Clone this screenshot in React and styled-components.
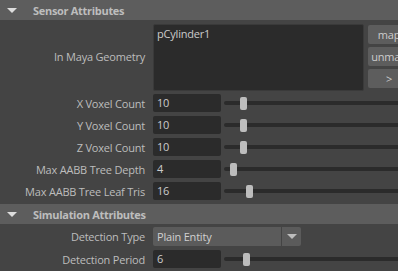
import React from 'react';
import styled, { createGlobalStyle } from 'styled-components';

const Global = createGlobalStyle`
  html, body {
    margin: 0;
    padding: 0;
    background: #444444;
    overflow: hidden;
  }
  body {
    font-family: "Open Sans", "Noto Sans", sans-serif;
    font-size: 11px;
    letter-spacing: -0.2px;
    color: #bdbdbd;
  }
`;

const Editor = styled.div`
  width: 398px;
  height: 271px;
  overflow: hidden;
  background: #444444;
`;

const Header = styled.div`
  display: flex;
  align-items: center;
  height: 20px;
  background: #5d5d5d;
  color: #bdbdbd;
  font-weight: 700;
  font-size: 11px;
  letter-spacing: -0.3px;
  margin-top: ${p => p.top || 0}px;
`;

const Arrow = styled.span`
  width: 0;
  height: 0;
  margin: 0 16px 0 7px;
  border-left: 5px solid transparent;
  border-right: 5px solid transparent;
  border-top: 5px solid #dddddd;
`;

const Section = styled.div`
  display: flex;
  flex-direction: column;
  gap: 4px;
  padding-top: ${p => p.pad}px;
`;

const Row = styled.div`
  display: flex;
  align-items: center;
  height: ${p => p.h || 18}px;
  margin-bottom: ${p => p.mb || 0}px;
`;

const Label = styled.div`
  width: 145px;
  flex: none;
  text-align: right;
  padding-right: 8px;
  white-space: nowrap;
`;

const ListBox = styled.div`
  width: 203px;
  height: 63px;
  flex: none;
  align-self: flex-start;
  background: #2b2b2b;
  border: 1px solid #3a3a3a;
  border-radius: 2px;
  color: #cccccc;
  padding: 1px 3px;
  box-sizing: content-box;
  line-height: 16px;
`;

const ButtonColumn = styled.div`
  display: flex;
  flex-direction: column;
  gap: 3px;
  margin-left: 4px;
  align-self: flex-start;
  margin-top: 1px;
`;

const Button = styled.div`
  width: 42px;
  height: 19px;
  background: #5d5d5d;
  border-radius: 2px;
  color: #cccccc;
  display: flex;
  align-items: center;
  justify-content: center;
  flex: none;
`;

const Field = styled.div`
  width: 64px;
  height: 18px;
  flex: none;
  background: #2b2b2b;
  border-radius: 2px;
  color: #cccccc;
  padding-left: 4px;
  line-height: 18px;
`;

const Track = styled.div`
  position: relative;
  flex: 1;
  min-width: 200px;
  height: 4px;
  margin-left: 3px;
  background: #2b2b2b;
  border-radius: 2px;
`;

const Thumb = styled.div`
  position: absolute;
  top: -4px;
  width: 7px;
  height: 13px;
  background: #bdbdbd;
  border-radius: 2px;
`;

const Dropdown = styled.div`
  display: flex;
  gap: 1px;
  flex: none;
`;

const DropValue = styled.div`
  width: 124px;
  height: 19px;
  background: #5b5b5b;
  border-radius: 2px 0 0 2px;
  color: #d0d0d0;
  padding-left: 4px;
  line-height: 19px;
`;

const DropButton = styled.div`
  width: 19px;
  height: 19px;
  background: #5b5b5b;
  border-radius: 0 2px 2px 0;
  display: flex;
  align-items: center;
  justify-content: center;
  &::after {
    content: '';
    border-left: 5px solid transparent;
    border-right: 5px solid transparent;
    border-top: 5px solid #bdbdbd;
  }
`;

const NumberRow = ({ label, value, pos }) => (
  <Row>
    <Label>{label}</Label>
    <Field>{value}</Field>
    <Track>
      <Thumb style={{ left: pos }} />
    </Track>
  </Row>
);

const sensorRows = [
  { label: 'X Voxel Count', value: '10', pos: 16 },
  { label: 'Y Voxel Count', value: '10', pos: 16 },
  { label: 'Z Voxel Count', value: '10', pos: 16 },
  { label: 'Max AABB Tree Depth', value: '4', pos: 6 },
  { label: 'Max AABB Tree Leaf Tris', value: '16', pos: 22 }
];

export default function App() {
  return (
    <Editor>
      <Global />
      <Header>
        <Arrow />
        Sensor Attributes
      </Header>
      <Section pad={4}>
        <Row h={65} mb={1}>
          <Label>In Maya Geometry</Label>
          <ListBox>pCylinder1</ListBox>
          <ButtonColumn>
            <Button>map</Button>
            <Button>unmap</Button>
            <Button>&gt;</Button>
          </ButtonColumn>
        </Row>
        {sensorRows.map(r => (
          <NumberRow key={r.label} {...r} />
        ))}
      </Section>
      <Header top={4}>
        <Arrow />
        Simulation Attributes
      </Header>
      <Section pad={3}>
        <Row h={19}>
          <Label>Detection Type</Label>
          <Dropdown>
            <DropValue>Plain Entity</DropValue>
            <DropButton />
          </Dropdown>
        </Row>
        <NumberRow label="Detection Period" value="6" pos={19} />
      </Section>
    </Editor>
  );
}
